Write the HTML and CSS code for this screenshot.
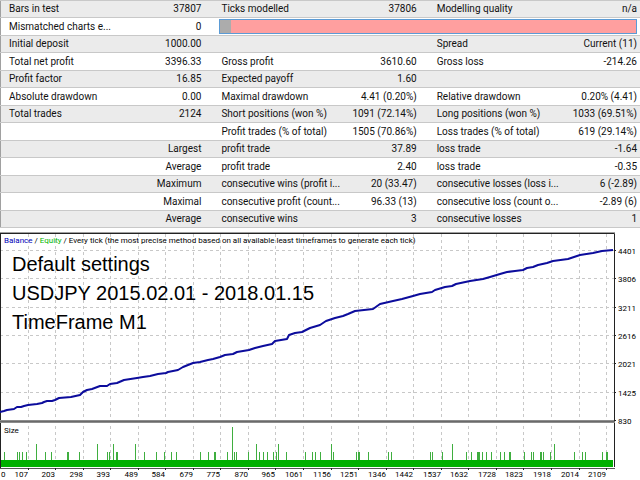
FILE: index.html
```html
<!DOCTYPE html>
<html lang="en">
<head>
    <meta charset="UTF-8">
    <meta name="viewport" content="width=device-width, initial-scale=1.0">
    <title>Strategy Tester Report</title>
    <link rel="stylesheet" href="styles.css">
</head>
<body>
    <table class="report">
        <colgroup>
            <col class="label"><col class="value-first">
            <col class="label"><col class="value">
            <col class="label"><col class="value">
        </colgroup>
        <tbody>
            <tr><td>Bars in test</td><td>37807</td><td>Ticks modelled</td><td>37806</td><td>Modelling quality</td><td>n/a</td></tr>
            <tr><td>Mismatched charts e...</td><td>0</td><td colspan="4" class="quality-cell"><div class="quality"><div class="quality-done"></div></div></td></tr>
            <tr><td>Initial deposit</td><td>1000.00</td><td></td><td></td><td>Spread</td><td>Current (11)</td></tr>
            <tr><td>Total net profit</td><td>3396.33</td><td>Gross profit</td><td>3610.60</td><td>Gross loss</td><td>-214.26</td></tr>
            <tr><td>Profit factor</td><td>16.85</td><td>Expected payoff</td><td>1.60</td><td></td><td></td></tr>
            <tr><td>Absolute drawdown</td><td>0.00</td><td>Maximal drawdown</td><td>4.41 (0.20%)</td><td>Relative drawdown</td><td>0.20% (4.41)</td></tr>
            <tr><td>Total trades</td><td>2124</td><td>Short positions (won %)</td><td>1091 (72.14%)</td><td>Long positions (won %)</td><td>1033 (69.51%)</td></tr>
            <tr><td></td><td></td><td>Profit trades (% of total)</td><td>1505 (70.86%)</td><td>Loss trades (% of total)</td><td>619 (29.14%)</td></tr>
            <tr><td></td><td>Largest</td><td>profit trade</td><td>37.89</td><td>loss trade</td><td>-1.64</td></tr>
            <tr><td></td><td>Average</td><td>profit trade</td><td>2.40</td><td>loss trade</td><td>-0.35</td></tr>
            <tr><td></td><td>Maximum</td><td>consecutive wins (profit i...</td><td>20 (33.47)</td><td>consecutive losses (loss i...</td><td>6 (-2.89)</td></tr>
            <tr><td></td><td>Maximal</td><td>consecutive profit (count...</td><td>96.33 (13)</td><td>consecutive loss (count o...</td><td>-2.89 (6)</td></tr>
            <tr><td></td><td>Average</td><td>consecutive wins</td><td>3</td><td>consecutive losses</td><td>1</td></tr>
        </tbody>
    </table>

    <svg class="chart" viewBox="0 231 640 249" role="img" aria-label="Balance chart">
        <g id="grid" class="grid"></g>

        <!-- panel frames -->
        <path class="frame-soft" d="M0 232.5H615"/>
        <path class="frame" d="M0 233.5H614.5V467M0.5 233V468"/>
        <rect class="divider" x="0" y="420" width="615" height="3"/>
        <path class="divider-line" d="M0 421.5H615"/>

        <rect class="size-fill" x="1" y="460" width="612" height="7"/>
        <path id="sizeBars" class="size-bars"/>
        <path class="base-line" d="M0 468.5H615"/>

        <path class="balance" d="M0 412L4 411L7 410L14 409L17 407L21 407L24 406L28 405L37 404L42 403L44 402L47 401L52 401L55 400L59 398L71 397L80 395L83 392L87 390L92 389L100 386L107 386L110 384L117 383L124 380L137 378L143 377L150 376L158 374L166 373L168 372L173 371L178 370L183 367L193 363L200 362L208 360L213 359L220 357L225 355L233 354L237 352L249 350L255 348L263 346L272 344L275 341L287 339L289 335L295 333L302 332L310 328L320 325L326 321L335 318L343 316L348 314L355 311L373 309L380 304L393 301L402 299L413 296L420 294L432 292L435 290L445 287L452 286L456 284L470 281L483 279L490 277L500 274L507 272L515 271L523 270L527 268L533 267L538 265L547 263L553 261L568 259L580 255L593 253L602 251L613 250"/>

        <text class="legend" x="4" y="243"><tspan class="legend-balance">Balance</tspan> / <tspan class="legend-equity">Equity</tspan> / Every tick (the most precise method based on all available least timeframes to generate each tick)</text>
        <text class="legend" x="4" y="433">Size</text>

        <text class="caption" x="12" y="271">Default settings</text>
        <text class="caption" x="12" y="300">USDJPY 2015.02.01 - 2018.01.15</text>
        <text class="caption" x="12" y="329">TimeFrame M1</text>

        <g id="axes"></g>
    </svg>

    <script src="chart.js"></script>
</body>
</html>
```
FILE: styles.css
```css
body {
    margin: 0;
    background-color: #fff;
    color: #111;
    font-family: Roboto, "Open Sans", sans-serif;
    font-size: 10px;
}
.report {
    width: 100%;
    table-layout: fixed;
    border-collapse: collapse;
    border-left: 1px solid #a0a0a0;
    border-bottom: 1px solid #c8c8c8;
}
.label {
    width: 20%;
}
.value {
    width: 14%;
}
.value-first {
    width: 13%;
}
.report tr {
    height: 17px;
}
.report tr:nth-child(even) {
    height: 18px;
}
.report tr:nth-child(odd) {
    background-color: #ebebeb;
}
.report td {
    padding: 0 8px 0 12px;
    border-top: 1px solid #c8c8c8;
    line-height: 16px;
    white-space: nowrap;
}
.report td:first-child {
    padding-left: 8px;
}
.report td:nth-child(even) {
    text-align: right;
}
.report td:last-child {
    padding-right: 3px;
}
.report .quality-cell {
    padding: 0 2px 0 10px;
}
.quality {
    height: 13px;
    border: 1px solid #5b9bd5;
    background-color: #ff9f9f;
}
.quality-done {
    width: 11px;
    height: 100%;
    background-color: #acacac;
}
.chart {
    display: block;
    width: 100%;
    margin-top: 3px;
}
.chart path {
    fill: none;
}
.grid {
    stroke: #c8c8c8;
    stroke-dasharray: 3 3;
}
.frame {
    stroke: #222;
}
.frame-soft {
    stroke: #a0a0a0;
}
.divider {
    fill: #8c8c8c;
}
.divider-line {
    stroke: #6a6a6a;
}
.base-line {
    stroke: #555;
}
.ticks {
    stroke: #222;
}
.size-fill {
    fill: #00b000;
}
.size-bars {
    stroke: #3fae3f;
}
.balance {
    stroke: #0c0c9c;
    stroke-width: 2;
    stroke-linejoin: round;
}
.legend,
.axis {
    font-size: 8px;
    fill: #000;
}
.axis-x {
    text-anchor: end;
}
.legend-balance {
    fill: #0000b8;
}
.legend-equity {
    fill: #00b800;
}
.caption {
    font-family: "Liberation Sans", Arial, sans-serif;
    font-size: 20px;
    fill: #000;
}
```
FILE: chart.js
```js
const NS = 'http://www.w3.org/2000/svg';
const grid = document.getElementById('grid');
const axes = document.getElementById('axes');

const xLabels = [107, 203, 298, 393, 489, 584, 679, 775, 870, 965, 1061, 1156, 1251, 1346, 1442, 1537, 1632, 1728, 1823, 1918, 2014, 2109];
const yLabels = [4401, 3806, 3211, 2616, 2021, 1425, 830];

function addPath(parent, d, className) {
    const path = document.createElementNS(NS, 'path');
    path.setAttribute('d', d);
    if (className) path.setAttribute('class', className);
    parent.appendChild(path);
}

function addLabel(x, y, text, className) {
    const label = document.createElementNS(NS, 'text');
    label.setAttribute('x', x);
    label.setAttribute('y', y);
    label.setAttribute('class', className);
    label.textContent = text;
    axes.appendChild(label);
}

addLabel(1, 477, 0, 'axis');
xLabels.forEach((value, i) => {
    const x = Math.floor(28 + i * 27.55);
    addPath(grid, `M${x + 0.5} 234V468`);
    addPath(axes, `M${x + 0.5} 468V470`, 'ticks');
    addLabel(x, 477, value, 'axis axis-x');
});

yLabels.forEach((value, i) => {
    const y = Math.round(250 + i * 28.3);
    if (i < 6) addPath(grid, `M0 ${y + 0.5}H614`);
    addPath(axes, `M614 ${y + 0.5}H616`, 'ticks');
    addLabel(618, y + 4, value, 'axis');
});

// trade sizes: x positions grouped by bar top
const bars = {
    452: [4, 17, 19, 22, 26, 45, 51, 67, 68, 79, 107, 109, 116, 117, 144, 156, 164, 171, 176, 200, 208, 214, 215,
        227, 234, 236, 248, 259, 263, 267, 273, 276, 286, 305, 312, 315, 320, 333, 356, 358, 359, 368, 388, 391,
        430, 432, 442, 466, 471, 477, 478, 479, 482, 486, 491, 500, 504, 509, 510, 524, 531, 533, 540, 541, 543,
        550, 574, 582, 585, 602, 606, 607],
    444: [36, 97, 113, 135, 256, 278, 331, 452, 554],
    427: [232]
};
let d = '';
for (const top in bars) {
    bars[top].forEach(x => d += `M${x + 0.5} ${top}V460`);
}
document.getElementById('sizeBars').setAttribute('d', d);
```
